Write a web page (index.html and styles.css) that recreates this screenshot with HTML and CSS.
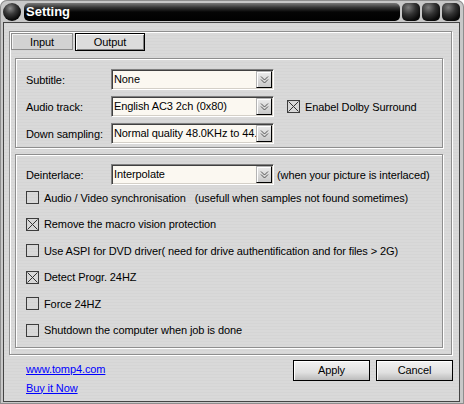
FILE: index.html
```html
<!DOCTYPE html>
<html>
<head>
<meta charset="utf-8">
<title>Setting</title>
<link rel="stylesheet" href="styles.css">
</head>
<body>
<div class="window">
  <div class="titlebar">
    <span class="orb"></span>
    <div class="caption">Setting</div>
    <span class="tbtn"></span><span class="tbtn"></span><span class="tbtn"></span>
  </div>
  <div class="client">
    <div class="panel">
      <div class="tabs">
        <div class="tab tab-input">Input</div>
        <div class="tab tab-output">Output</div>
      </div>
      <div class="group group-audio">
        <div class="row">
          <span class="label">Subtitle:</span>
          <div class="select"><span class="value">None</span><span class="drop"><svg width="9" height="10" viewBox="0 0 9 10"><polyline points="1,1.5 4.5,5 8,1.5" fill="none" stroke="#555" stroke-width="1"/><polyline points="1,4.5 4.5,8 8,4.5" fill="none" stroke="#555" stroke-width="1"/></svg></span></div>
        </div>
        <div class="row">
          <span class="label">Audio track:</span>
          <div class="select"><span class="value">English AC3 2ch (0x80)</span><span class="drop"><svg width="9" height="10" viewBox="0 0 9 10"><polyline points="1,1.5 4.5,5 8,1.5" fill="none" stroke="#555" stroke-width="1"/><polyline points="1,4.5 4.5,8 8,4.5" fill="none" stroke="#555" stroke-width="1"/></svg></span></div>
          <span class="cb cb-dolby"><svg width="11" height="11" viewBox="0 0 11 11"><path d="M0.5 0.5L10.5 10.5M10.5 0.5L0.5 10.5" stroke="#333" stroke-width="1"/></svg></span>
          <span class="cbtext">Enabel Dolby Surround</span>
        </div>
        <div class="row">
          <span class="label">Down sampling:</span>
          <div class="select"><span class="value">Normal quality 48.0KHz to 44.</span><span class="drop"><svg width="9" height="10" viewBox="0 0 9 10"><polyline points="1,1.5 4.5,5 8,1.5" fill="none" stroke="#555" stroke-width="1"/><polyline points="1,4.5 4.5,8 8,4.5" fill="none" stroke="#555" stroke-width="1"/></svg></span></div>
        </div>
      </div>
      <div class="group group-video">
        <div class="row">
          <span class="label">Deinterlace:</span>
          <div class="select"><span class="value">Interpolate</span><span class="drop"><svg width="9" height="10" viewBox="0 0 9 10"><polyline points="1,1.5 4.5,5 8,1.5" fill="none" stroke="#555" stroke-width="1"/><polyline points="1,4.5 4.5,8 8,4.5" fill="none" stroke="#555" stroke-width="1"/></svg></span></div>
          <span class="note">(when your picture is interlaced)</span>
        </div>
        <div class="cbrow"><span class="cb"></span><span class="cbtext">Audio / Video synchronisation &nbsp;&nbsp;(usefull when samples not found sometimes)</span></div>
        <div class="cbrow"><span class="cb"><svg width="11" height="11" viewBox="0 0 11 11"><path d="M0.5 0.5L10.5 10.5M10.5 0.5L0.5 10.5" stroke="#333" stroke-width="1"/></svg></span><span class="cbtext">Remove the macro vision protection</span></div>
        <div class="cbrow"><span class="cb"></span><span class="cbtext">Use ASPI for DVD driver( need for drive authentification and for files &gt; 2G)</span></div>
        <div class="cbrow"><span class="cb"><svg width="11" height="11" viewBox="0 0 11 11"><path d="M0.5 0.5L10.5 10.5M10.5 0.5L0.5 10.5" stroke="#333" stroke-width="1"/></svg></span><span class="cbtext">Detect Progr. 24HZ</span></div>
        <div class="cbrow"><span class="cb"></span><span class="cbtext">Force 24HZ</span></div>
        <div class="cbrow"><span class="cb"></span><span class="cbtext">Shutdown the computer when job is done</span></div>
      </div>
    </div>
    <div class="footer">
      <div class="links">
        <a href="#">www.tomp4.com</a>
        <a href="#">Buy it Now</a>
      </div>
      <div class="buttons">
        <div class="btn">Apply</div>
        <div class="btn">Cancel</div>
      </div>
    </div>
  </div>
</div>
</body>
</html>
```

FILE: styles.css
```css
* { box-sizing: border-box; }
html, body { margin: 0; padding: 0; }
body {
  font-family: "Liberation Sans", Arial, sans-serif;
  font-size: 11px;
  letter-spacing: -0.1px;
  color: #000;
  background: #fff;
}
.window {
  width: 464px;
  height: 404px;
  padding: 3px 4px 2px 3px;
  background: #c8c8c8;
  border-radius: 7px 7px 0 0;
  box-shadow: inset 0 0 0 1px #8e8e8e;
  display: flex;
  flex-direction: column;
}
.titlebar {
  height: 18px;
  margin-bottom: 1px;
  display: flex;
  flex: none;
}
.orb {
  width: 18px;
  height: 18px;
  border-radius: 50%;
  background: radial-gradient(circle at 40% 30%, #8a8a8a 0, #3a3a3a 35%, #0a0a0a 70%);
  flex: none;
}
.caption {
  flex: 1;
  margin-left: 3px;
  border-radius: 5px;
  background: linear-gradient(to bottom, #7a7a7a 0, #353535 25%, #050505 50%, #000 100%);
  color: #fff;
  font-weight: bold;
  font-size: 13px;
  letter-spacing: 0;
  line-height: 18px;
  padding-left: 2px;
}
.tbtn {
  width: 18px;
  height: 18px;
  margin-left: 2px;
  border-radius: 5px;
  background: radial-gradient(circle at 35% 25%, #7e7e7e 0, #333 40%, #0a0a0a 75%);
  flex: none;
}
.client {
  flex: 1;
  border: 1px solid #444;
  background: #d7d7d7 repeating-linear-gradient(to bottom, #d5d5d5 0, #d5d5d5 1px, #d9d9d9 1px, #d9d9d9 3px);
  display: flex;
  flex-direction: column;
}
.panel {
  margin: 8px 7px 0 5px;
  border: 1px solid #8e8e8e;
  box-shadow: inset 1px 1px 0 #fff, 1px 1px 0 #fff;
  padding: 1px 0 6px 0;
}
.tabs {
  display: flex;
  gap: 2px;
  margin-left: 1px;
  height: 17px;
  align-items: flex-start;
}
.tab {
  height: 17px;
  display: flex;
  align-items: center;
  justify-content: center;
}
.tab-input {
  width: 62px;
  border: 1px solid #8c8c8c;
  box-shadow: inset 1px 1px 0 #f2f2f2;
  background: #d2d2d2;
}
.tab-output {
  width: 70px;
  height: 18px;
  border: 1px solid #000;
  box-shadow: inset 1px 1px 0 #fff, inset -1px -1px 0 #808080;
  background: #dcdcdc;
}
.group {
  margin: 8px 8px 0 5px;
  border: 1px solid #8e8e8e;
  box-shadow: inset 1px 1px 0 #fff, 1px 1px 0 #fff;
  display: flex;
  flex-direction: column;
}
.group-audio {
  padding: 10px 0 3px 10px;
  gap: 6px;
}
.group-video {
  margin-top: 6px;
  padding: 9px 0 10px 10px;
}
.row {
  display: flex;
  align-items: center;
  height: 21px;
}
.label {
  width: 85px;
  flex: none;
}
.select {
  width: 163px;
  height: 21px;
  flex: none;
  display: flex;
  border: 1px solid;
  border-color: #808080 #fff #fff #808080;
  box-shadow: inset 1px 1px 0 #404040, inset -1px -1px 0 #d4d0c8;
  background: #fbf8f1;
  padding: 1px;
}
.value {
  flex: 1;
  min-width: 0;
  padding-left: 1px;
  line-height: 17px;
  overflow: hidden;
  white-space: nowrap;
}
.drop {
  width: 16px;
  height: 17px;
  flex: none;
  border: 1px solid;
  border-color: #b4b4b4 #000 #000 #b4b4b4;
  box-shadow: inset 1px 1px 0 #fff;
  background: linear-gradient(to bottom, #ececec, #c8c8c8);
  display: flex;
  align-items: center;
  justify-content: center;
}
.drop svg { display: block; }
.cb {
  width: 13px;
  height: 13px;
  flex: none;
  border: 1px solid #3c3c3c;
  display: flex;
}
.cb svg { display: block; }
.cb-dolby { margin-left: 13px; }
.cbtext {
  margin-left: 5px;
  white-space: pre;
}
.note {
  margin-left: 3px;
  white-space: nowrap;
}
.cbrow {
  display: flex;
  align-items: center;
  height: 13px;
  margin-top: 13.5px;
}
.row + .cbrow { margin-top: 6px; }
.footer {
  flex: 1;
  display: flex;
  align-items: flex-start;
  padding: 5px 6px 0 22px;
}
.links {
  flex: 1;
  display: flex;
  flex-direction: column;
  align-items: flex-start;
  line-height: 19px;
}
.links a {
  color: #0000ff;
  text-decoration: underline;
}
.buttons {
  display: flex;
  gap: 6px;
}
.btn {
  width: 77px;
  height: 21px;
  border: 1px solid #000;
  box-shadow: inset 1px 1px 0 #fff;
  background: linear-gradient(to bottom, #f2f2f2 0, #e0e0e0 60%, #bcbcbc 100%);
  display: flex;
  align-items: center;
  justify-content: center;
}
```
